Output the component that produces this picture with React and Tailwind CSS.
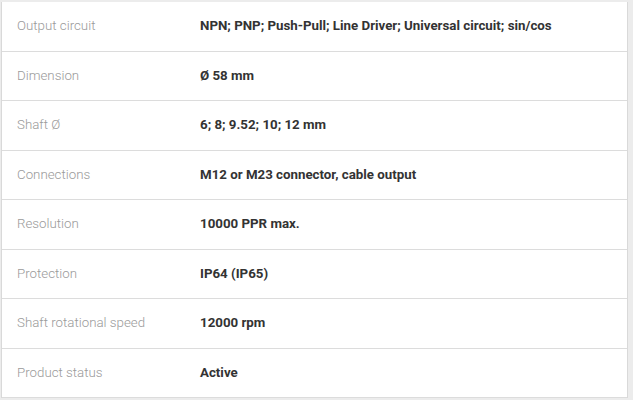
const specs = [
  ["Output circuit", "NPN; PNP; Push-Pull; Line Driver; Universal circuit; sin/cos"],
  ["Dimension", "Ø 58 mm"],
  ["Shaft Ø", "6; 8; 9.52; 10; 12 mm"],
  ["Connections", "M12 or M23 connector, cable output"],
  ["Resolution", "10000 PPR max."],
  ["Protection", "IP64 (IP65)"],
  ["Shaft rotational speed", "12000 rpm"],
  ["Product status", "Active"],
];

export default function App() {
  return (
    <div
      className="w-[633px] h-[400px] bg-[#ececec] pt-[2px] pl-px pr-[5px] overflow-hidden"
      style={{ fontFamily: "Roboto, 'Liberation Sans', sans-serif" }}
    >
      <div className="bg-white border-l border-r border-[#d9d9d9]">
        {specs.map(([label, value]) => (
          <div
            key={label}
            className="flex items-center h-[49.5px] border-b border-[#dcdcdc] text-[13.3px]"
          >
            <div className="w-[198px] pl-[15px] text-[#9a9a9a] font-light">{label}</div>
            <div className="font-bold text-[#333]">{value}</div>
          </div>
        ))}
      </div>
    </div>
  );
}
